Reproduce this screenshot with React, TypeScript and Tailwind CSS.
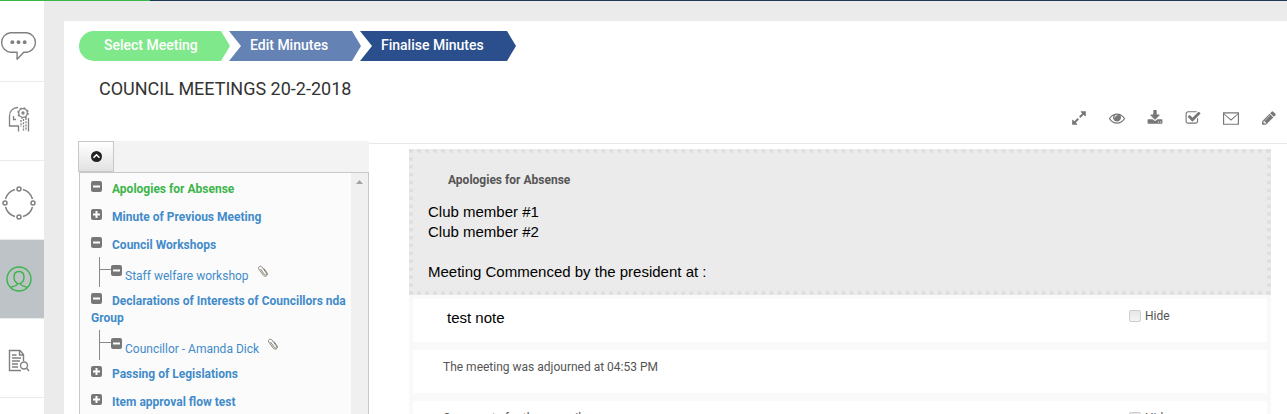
import React, { useState } from "react";

type TreeNode = {
  label: string;
  open: boolean;
  active?: boolean;
  children?: string[];
};

const tree: TreeNode[] = [
  { label: "Apologies for Absense", open: true, active: true },
  { label: "Minute of Previous Meeting", open: false },
  { label: "Council Workshops", open: true, children: ["Staff welfare workshop"] },
  { label: "Declarations of Interests of Councillors nda Group", open: true, children: ["Councillor - Amanda Dick"] },
  { label: "Passing of Legislations", open: false },
  { label: "Item approval flow test", open: false },
];

const steps = [
  {
    label: "Select Meeting",
    className:
      "w-[151px] rounded-l-full bg-[#7fe88b] pl-[25px] [clip-path:polygon(0_0,142px_0,100%_50%,142px_100%,0_100%)]",
  },
  {
    label: "Edit Minutes",
    className:
      "-ml-px w-[132px] bg-[#6482b3] pl-[21px] [clip-path:polygon(0_0,123px_0,100%_50%,123px_100%,0_100%,12px_50%)]",
  },
  {
    label: "Finalise Minutes",
    className:
      "-ml-px w-[156px] bg-[#2b4f8c] pl-[21px] [clip-path:polygon(0_0,147px_0,100%_50%,147px_100%,0_100%,12px_50%)]",
  },
];

const tools = [
  {
    label: "Expand",
    path: "M883 1056q0 13-10 23l-332 332 144 144q19 19 19 45t-19 45-45 19h-448q-26 0-45-19t-19-45v-448q0-26 19-45t45-19 45 19l144 144 332-332q10-10 23-10t23 10l114 114q10 10 10 23zm781-864v448q0 26-19 45t-45 19-45-19l-144-144-332 332q-10 10-23 10t-23-10l-114-114q-10-10-10-23t10-23l332-332-144-144q-19-19-19-45t19-45 45-19h448q26 0 45 19t19 45z",
  },
  {
    label: "Preview",
    path: "M1664 960q-152-236-381-353 61 104 61 225 0 185-131.5 316.5t-316.5 131.5-316.5-131.5-131.5-316.5q0-121 61-225-229 117-381 353 133 205 333.5 326.5t434.5 121.5 434.5-121.5 333.5-326.5zm-720-384q0-20-14-34t-34-14q-125 0-214.5 89.5t-89.5 214.5q0 20 14 34t34 14 34-14 14-34q0-86 61-147t147-61q20 0 34-14t14-34zm848 384q0 34-20 69-140 230-376.5 368.5t-499.5 138.5-499.5-139-376.5-368q-20-35-20-69t20-69q140-229 376.5-368t499.5-139 499.5 139 376.5 368q20 35 20 69z",
  },
  {
    label: "Download",
    path: "M1344 1344q0-26-19-45t-45-19-45 19-19 45 19 45 45 19 45-19 19-45zm256 0q0-26-19-45t-45-19-45 19-19 45 19 45 45 19 45-19 19-45zm128-224v320q0 40-28 68t-68 28h-1472q-40 0-68-28t-28-68v-320q0-40 28-68t68-28h465l135 136q58 56 136 56t136-56l136-136h464q40 0 68 28t28 68zm-325-569q17 41-14 70l-448 448q-18 19-45 19t-45-19l-448-448q-31-29-14-70 17-39 59-39h256v-448q0-26 19-45t45-19h256q26 0 45 19t19 45v448h256q42 0 59 39z",
  },
  {
    label: "Approve",
    path: "M1472 930v318q0 119-84.5 203.5t-203.5 84.5h-832q-119 0-203.5-84.5t-84.5-203.5v-832q0-119 84.5-203.5t203.5-84.5h832q63 0 117 25 15 7 18 23 3 17-9 29l-49 49q-10 10-23 10-3 0-9-2-23-6-45-6h-832q-66 0-113 47t-47 113v832q0 66 47 113t113 47h832q66 0 113-47t47-113v-254q0-13 9-22l64-64q10-10 23-10 6 0 12 3 20 8 20 29zm231-489l-814 814q-24 24-57 24t-57-24l-430-430q-24-24-24-57t24-57l110-110q24-24 57-24t57 24l263 263 647-647q24-24 57-24t57 24l110 110q24 24 24 57t-24 57z",
  },
  {
    label: "Mail",
    path: "M0 260h1792v1404h-1792zM130 500v1040h1532v-1040l-766 690zM130 390l766 650 766-650z",
  },
  {
    label: "Edit",
    path: "M491 1536l91-91-235-235-91 91v107h128v128h107zm523-928q0-22-22-22-10 0-17 7l-542 542q-7 7-7 17 0 22 22 22 10 0 17-7l542-542q7-7 7-17zm-54-192l416 416-832 832h-416v-416zm683 96q0 53-37 90l-166 166-416-416 166-165q36-38 90-38 53 0 91 38l235 234q37 39 37 91z",
  },
];

function ChatIcon() {
  return (
    <svg className="mt-2 h-8 w-10" viewBox="0 0 40 32" fill="none" stroke="#808080" strokeWidth="1.5">
      <path d="M11 2h17a10.300 10.300 0 0 1 0 20.500h-3l-7 7.500v-7.500h-7a10.300 10.300 0 0 1 0-20.500z" strokeLinejoin="round" />
      <g fill="#808080" stroke="none">
        <circle cx="13" cy="12" r="2" />
        <circle cx="19.500" cy="12" r="2" />
        <circle cx="26" cy="12" r="2" />
      </g>
    </svg>
  );
}

function MindIcon() {
  return (
    <svg className="mb-1 h-[26px] w-[22px]" viewBox="0 0 22 26" fill="none" stroke="#808080" strokeWidth="1.300">
      <path d="M10 1.500C5 1.500 1.500 5 1.500 10v10H10.500v5.500M5.500 10v3.500H8M20.500 12v13.500" />
      <circle cx="15" cy="7" r="4.300" />
      <circle cx="15" cy="7" r="5.200" strokeWidth="1.200" strokeDasharray="2 2.080" />
      <circle cx="15" cy="7" r="1" />
      <path d="M13 14v7M15.500 13v12.500M18 12v13" strokeDasharray="2 1.200" />
    </svg>
  );
}

function NetworkIcon() {
  return (
    <svg className="mt-1.5 h-[34px] w-[34px]" viewBox="0 0 34 34" fill="none" stroke="#808080" strokeWidth="1.500">
      <path d="M21 3.500A14 14 0 0 1 30.500 13M30.500 21A14 14 0 0 1 21 30.500M13 30.500A14 14 0 0 1 3.500 21M3.500 13A14 14 0 0 1 13 3.500" />
      <circle cx="17" cy="3" r="2" />
      <circle cx="31" cy="17" r="2" />
      <circle cx="17" cy="31" r="2" />
      <circle cx="3" cy="17" r="2" />
    </svg>
  );
}

function UserIcon() {
  return (
    <svg className="h-[26px] w-[26px]" viewBox="0 0 26 26" fill="none" stroke="#3bb54a" strokeWidth="1.400">
      <circle cx="13" cy="13" r="12" />
      <path d="M13 5.500c-3.300 0-5 2.200-5 5.500 0 3 1.300 5 3 6v1.500c0 1-4 2-6.500 3M13 5.500c3.300 0 5 2.200 5 5.500 0 3-1.300 5-3 6v1.500c0 1 4 2 6.500 3M11 17c1.200.8 2.800.8 4 0" />
    </svg>
  );
}

function DocumentIcon() {
  return (
    <svg className="mt-1 h-[23px] w-[22px]" viewBox="0 0 22 23" fill="none" stroke="#808080" strokeWidth="1.400">
      <path d="M13 21.500H1.500V1.500H12l3.500 4V12M11.500 1.500V6h4M4 6h4.500M4 9h9M4 12h8M4 15h6M4 18h6" />
      <circle cx="16" cy="16.500" r="3.500" />
      <path d="M18.500 19l2.500 3" />
    </svg>
  );
}

const menu = [
  { label: "Messages", icon: <ChatIcon /> },
  { label: "Knowledge", icon: <MindIcon /> },
  { label: "Network", icon: <NetworkIcon /> },
  { label: "Members", icon: <UserIcon />, active: true },
  { label: "Documents", icon: <DocumentIcon /> },
];

function Toggle({ open }: { open: boolean }) {
  return (
    <svg className="h-[11px] w-[11px] shrink-0" viewBox="0 0 11 11">
      <rect width="11" height="11" rx="2" fill="#777" />
      <path d={open ? "M2 5.500h7" : "M2 5.500h7M5.500 2v7"} stroke="#fff" strokeWidth="2" />
    </svg>
  );
}

function Paperclip() {
  return (
    <svg className="h-3 w-3" viewBox="0 0 12 12" fill="none" stroke="#8a8478" strokeWidth="1">
      <path d="M3.500 4l4 5.500c1 1.300 2.800.2 2-1.200L5 2C3.500.2.500 1.800 1.800 4l4.500 6.200c1.800 2.200 5.200.4 3.800-2.200L7 3.500" />
    </svg>
  );
}

function HideBox({ id }: { id: string }) {
  return (
    <div className="flex h-4 w-[138px] shrink-0 items-center gap-1">
      <input
        id={id}
        type="checkbox"
        className="h-3 w-3 appearance-none rounded-[2px] border border-[#ccc] bg-linear-to-b from-[#e8e8e8] to-[#f4f4f4] checked:bg-[#777]"
      />
      <label htmlFor={id} className="text-xs">
        Hide
      </label>
    </div>
  );
}

export default function App() {
  const [collapsed, setCollapsed] = useState(false);

  return (
    <div className="flex h-screen flex-col overflow-hidden bg-[#ebebeb] font-['Roboto',sans-serif] text-[#555]">
      <div className="flex h-px shrink-0 bg-[#1f3a56]">
        <div className="w-[150px] bg-[#3bb54a]" />
      </div>

      <div className="flex min-h-0 flex-1">
        <nav className="w-11 shrink-0 bg-white pt-0.5">
          {menu.map((item) => (
            <a
              key={item.label}
              href="#"
              aria-label={item.label}
              className={`flex h-[79px] items-center justify-center border-b border-[#e8ebec] pr-1.5 ${
                item.active ? "bg-[#bdc3c7]" : ""
              }`}
            >
              {item.icon}
            </a>
          ))}
        </nav>

        <main className="mt-5 ml-5 flex min-w-0 flex-1 flex-col bg-white">
          <div className="flex pt-2.5 pl-[15px]">
            {steps.map((step) => (
              <button
                key={step.label}
                className={`h-[30px] pb-0.5 text-left text-sm font-medium text-white ${step.className}`}
              >
                {step.label}
              </button>
            ))}
          </div>

          <h1 className="mt-4 pl-[35px] text-lg leading-6 text-[#333]">COUNCIL MEETINGS 20-2-2018</h1>

          <div className="flex h-10 items-center justify-end gap-[22px] pr-2.5 pb-[7px]">
            {tools.map((tool) => (
              <button key={tool.label} aria-label={tool.label}>
                <svg className="h-4 w-4" viewBox="0 0 1792 1792" fill="#777" fillRule="evenodd">
                  <path d={tool.path} />
                </svg>
              </button>
            ))}
          </div>

          <div className="flex min-h-0 flex-1">
            <aside className="ml-3.5 flex w-[291px] shrink-0 flex-col">
              <div className="h-[31px] shrink-0 bg-[#f3f3f3]">
                <button
                  aria-label="Toggle items"
                  onClick={() => setCollapsed(!collapsed)}
                  className="flex h-[31px] w-9 items-center justify-center border border-[#c8c8c8] bg-linear-to-b from-white to-[#e2e2e2]"
                >
                  <svg className="h-[11px] w-[11px]" viewBox="0 0 11 11">
                    <circle cx="5.500" cy="5.500" r="5.500" fill="#222" />
                    <path d="M2.500 6.800l3-3 3 3" fill="none" stroke="#fff" strokeWidth="1.600" />
                  </svg>
                </button>
              </div>
              {!collapsed && (
                <div className="ml-px flex min-h-0 flex-1 border border-b-0 border-[#c8c8c8] bg-[#fbfbfb]">
                  <ul className="min-w-0 flex-1 pt-2 pl-[11px] text-xs leading-[17px] text-[#428bca]">
                    {tree.map((node) => (
                      <li key={node.label}>
                        <a
                          href="#"
                          className={`block pb-[11px] font-bold ${node.active ? "text-[#3bb54a]" : ""}`}
                        >
                          <span className="mr-2.5 inline-block align-top">
                            <Toggle open={node.open} />
                          </span>
                          {node.label}
                        </a>
                        {node.children?.map((child) => (
                          <div key={child} className="-mt-2 mb-1.5 ml-2 flex h-[30px] border-l border-[#888]">
                            <span className="mt-3 h-px w-[11px] bg-[#888]" />
                            <span className="mt-2">
                              <Toggle open />
                            </span>
                            <a href="#" className="mt-[11px] ml-[3px]">
                              {child}
                            </a>
                            <span className="mt-2 ml-2">
                              <Paperclip />
                            </span>
                          </div>
                        ))}
                      </li>
                    ))}
                  </ul>
                  <div className="flex w-[17px] shrink-0 justify-center bg-[#f0f0f0] pt-[7px]">
                    <svg className="h-1 w-[7px]" viewBox="0 0 7 4" fill="#a3a3a3">
                      <path d="M0 4l3.500-4L7 4z" />
                    </svg>
                  </div>
                </div>
              )}
            </aside>

            <section className="mt-0.5 min-w-0 flex-1 border-t border-[#e8e8e8] pt-[5px] pr-4 pl-10">
              <div className="border-4 border-dotted border-[#dedede] bg-[#ebebeb] pt-[17px] pb-[9px] pl-[15px]">
                <h2 className="pl-5 text-xs leading-5 font-bold">Apologies for Absense</h2>
                <div className="mt-3 font-['Liberation_Sans',Arial,sans-serif] text-[15px] leading-5 text-black">
                  <p>Club member #1</p>
                  <p>Club member #2</p>
                  <p className="mt-5">Meeting Commenced by the president at :</p>
                </div>
              </div>
              <div className="flex h-[51px] justify-between border-4 border-[#f9f9f9] pt-[9px] pl-[34px]">
                <p className="font-['Liberation_Sans',Arial,sans-serif] text-[15px] leading-5 text-black">test note</p>
                <HideBox id="hide-note" />
              </div>
              <div className="h-[51px] border-4 border-[#f9f9f9] pt-[9px] pl-[30px]">
                <p className="text-xs">The meeting was adjourned at 04:53 PM</p>
              </div>
              <div className="flex h-[51px] justify-between border-4 border-[#f9f9f9] pt-[9px] pl-[30px]">
                <p className="text-xs">Comments for the council</p>
                <HideBox id="hide-comment" />
              </div>
            </section>
          </div>
        </main>
      </div>
    </div>
  );
}
